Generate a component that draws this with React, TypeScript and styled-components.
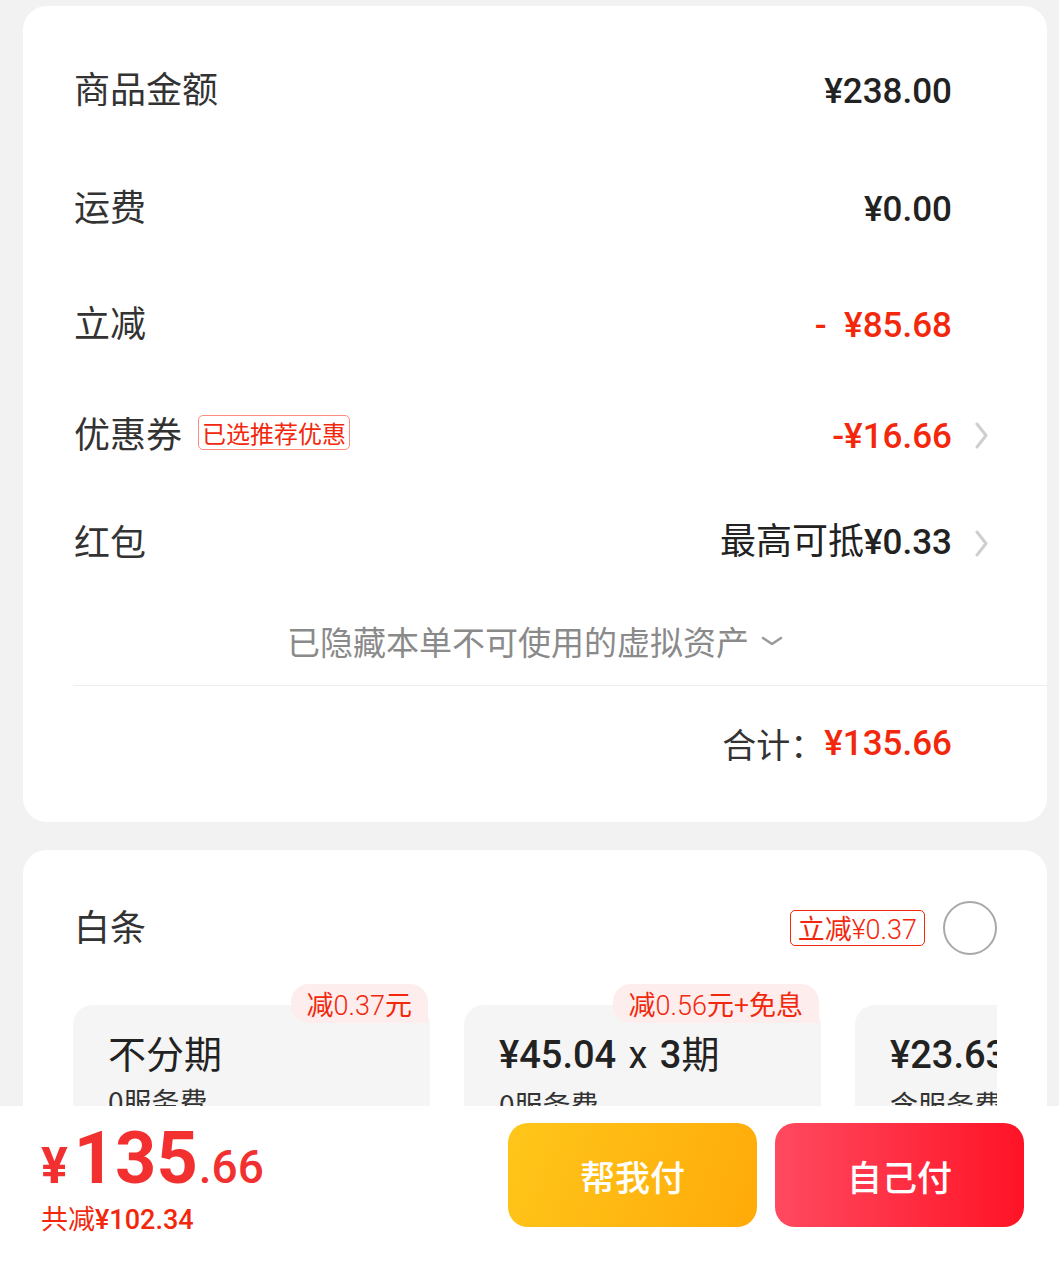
import React from "react";
import styled, { createGlobalStyle } from "styled-components";

const CJK = `"Noto Sans CJK SC", "Noto Sans", sans-serif`;
const NUM = `Roboto, "Noto Sans CJK SC", sans-serif`;
const RED = "#f2270c";

const GlobalStyle = createGlobalStyle`
  html, body { margin: 0; padding: 0; background: #f2f2f2; }
  body { font-family: ${CJK}; -webkit-font-smoothing: antialiased; }
  * { box-sizing: border-box; }
`;

const Page = styled.div`
  padding: 6px 12px 200px 23px;
`;

const Card = styled.section`
  background: #fff;
  border-radius: 24px;
  overflow: hidden;
`;

const SummaryCard = styled(Card)`
  padding: 25px 0 22px;
`;

const Row = styled.div<{ $h: number }>`
  display: flex;
  align-items: center;
  height: ${(p) => p.$h}px;
  padding: 0 50px 0 51px;
`;

const Label = styled.div`
  display: flex;
  align-items: center;
  gap: 16px;
  padding-bottom: 6px;
  font-family: ${CJK};
  font-size: 36px;
  color: #333;
  flex: none;
`;

const OutlineTag = styled.span`
  font-family: ${CJK};
  font-size: 24px;
  line-height: 33px;
  height: 35px;
  padding: 0 3px;
  color: ${RED};
  border: 1px solid #ff8c7e;
  border-radius: 5px;
`;

const Value = styled.div<{ $red?: boolean; $mixed?: boolean }>`
  margin-left: auto;
  padding-top: ${(p) => (p.$mixed ? 0 : 4)}px;
  padding-bottom: ${(p) => (p.$mixed ? 6 : 0)}px;
  font-family: ${NUM};
  font-size: 35px;
  font-weight: 500;
  line-height: 1.2;
  color: ${(p) => (p.$red ? RED : "#222")};
  white-space: pre;
`;

const ValueCJK = styled.span`
  font-family: ${CJK};
  font-weight: 400;
  font-size: 36px;
`;

const ChevronSlot = styled.div`
  width: 45px;
  flex: none;
  display: flex;
  justify-content: flex-end;
  padding-right: 9px;
`;

const HiddenRow = styled.div`
  height: 88px;
  display: flex;
  align-items: center;
  justify-content: center;
  gap: 12px;
  font-family: ${CJK};
  font-size: 33px;
  color: #8a8a8a;
`;

const Divider = styled.div`
  height: 1px;
  background: #eeeeee;
  margin-left: 50px;
`;

const TotalRow = styled.div`
  height: 114px;
  display: flex;
  align-items: center;
  justify-content: flex-end;
  padding-right: 95px;
`;

const TotalLabel = styled.span`
  font-family: ${CJK};
  font-size: 34px;
  color: #333;
`;

const TotalValue = styled.span`
  font-family: ${NUM};
  font-size: 35px;
  font-weight: 500;
  color: ${RED};
`;

const PayCard = styled(Card)`
  margin-top: 28px;
  padding-top: 28px;
  padding-bottom: 40px;
`;

const HeaderRow = styled.div`
  height: 100px;
  display: flex;
  align-items: center;
  padding: 0 50px 0 51px;
`;

const HeaderRight = styled.div`
  margin-left: auto;
  display: flex;
  align-items: center;
  gap: 18px;
`;

const SolidTag = styled.span`
  font-family: ${CJK};
  font-size: 27px;
  line-height: 34px;
  height: 36px;
  padding: 0 7px;
  color: ${RED};
  border: 1px solid ${RED};
  border-radius: 5px;
`;

const TagNum = styled.span`
  font-family: ${NUM};
  font-weight: 300;
`;

const Radio = styled.span`
  width: 54px;
  height: 54px;
  border-radius: 50%;
  border: 2px solid #a8a8a8;
`;

const Scroller = styled.div`
  margin: 6px 50px 0 50px;
  display: flex;
  gap: 34px;
  overflow: hidden;
`;

const Plan = styled.div`
  position: relative;
  flex: none;
  width: 357px;
  padding-top: 21px;
`;

const PlanBadge = styled.span`
  position: absolute;
  top: 0;
  right: 2px;
  height: 39px;
  line-height: 39px;
  padding: 0 16px;
  background: #fdeded;
  color: ${RED};
  font-family: ${CJK};
  font-size: 27px;
  border-radius: 18px 18px 0 18px;
`;

const BadgeNum = styled.span`
  font-family: ${NUM};
  font-weight: 300;
`;

const PlanCard = styled.div`
  background: #f5f5f5;
  border-radius: 20px 20px 0 0;
  height: 170px;
  padding: 22px 0 0 35px;
  white-space: nowrap;
`;

const PlanTitle = styled.div`
  font-family: ${CJK};
  font-size: 38px;
  line-height: 50px;
  color: #222;
`;

const PlanNum = styled.span`
  font-family: ${NUM};
  font-weight: 500;
`;

const PlanX = styled.span`
  font-family: ${NUM};
  font-weight: 400;
  padding: 0 3px;
`;

const PlanSub = styled.div`
  margin-top: 4px;
  font-family: ${CJK};
  font-size: 28px;
  color: #333;
`;

const BottomBar = styled.footer`
  position: fixed;
  left: 0;
  right: 0;
  bottom: 0;
  height: 169px;
  background: #fff;
  display: flex;
  align-items: flex-start;
  padding: 17px 35px 0 41px;
`;

const PriceBlock = styled.div`
  display: flex;
  flex-direction: column;
`;

const PriceLine = styled.div`
  display: flex;
  align-items: baseline;
  line-height: 1;
  color: #f23030;
  font-family: ${NUM};
`;

const PriceYen = styled.span`
  font-size: 50px;
  font-weight: 700;
`;

const PriceDec = styled.span`
  font-size: 46px;
  font-weight: 500;
`;

const PriceBig = styled.span`
  font-size: 72px;
  font-weight: 700;
  margin: 0 1px 0 6px;
`;

const SaveLine = styled.div`
  margin-top: 8px;
  font-family: ${CJK};
  font-size: 27px;
  line-height: 30px;
  color: ${RED};
`;

const SaveNum = styled.span`
  font-family: ${NUM};
  font-weight: 500;
`;

const Buttons = styled.div`
  margin-left: auto;
  display: flex;
  gap: 18px;
`;

const PayButton = styled.button<{ $from: string; $to: string; $angle: number }>`
  width: 249px;
  height: 104px;
  border: none;
  border-radius: 20px;
  color: #fff;
  font-family: ${CJK};
  font-size: 35px;
  font-weight: 500;
  background: linear-gradient(${(p) => p.$angle}deg, ${(p) => p.$from}, ${(p) => p.$to});
`;

const ChevronRight = () => (
  <svg width="13" height="27" viewBox="0 0 13 27" fill="none">
    <polyline points="2,2 11,13.5 2,25" stroke="#cfcfcf" strokeWidth="3" strokeLinecap="round" strokeLinejoin="round" />
  </svg>
);

const ChevronDown = () => (
  <svg width="22" height="12" viewBox="0 0 22 12" fill="none">
    <polyline points="2,3 11,9 20,3" stroke="#9a9a9a" strokeWidth="2.5" strokeLinecap="round" strokeLinejoin="round" />
  </svg>
);

type Line = {
  label: string;
  tag?: string;
  value: React.ReactNode;
  red?: boolean;
  mixed?: boolean;
  chevron?: boolean;
  h: number;
};

const lines: Line[] = [
  { label: "商品金额", value: "¥238.00", h: 118 },
  { label: "运费", value: "¥0.00", h: 118 },
  { label: "立减", value: "-  ¥85.68", red: true, h: 114 },
  { label: "优惠券", tag: "已选推荐优惠", value: "-¥16.66", red: true, chevron: true, h: 108 },
  {
    label: "红包",
    value: (
      <>
        <ValueCJK>最高可抵</ValueCJK>¥0.33
      </>
    ),
    mixed: true,
    chevron: true,
    h: 108,
  },
];

const plans = [
  {
    badge: (
      <>
        减<BadgeNum>0.37</BadgeNum>元
      </>
    ),
    title: <>不分期</>,
    sub: "0服务费",
  },
  {
    badge: (
      <>
        减<BadgeNum>0.56</BadgeNum>元+免息
      </>
    ),
    title: (
      <>
        <PlanNum>¥45.04</PlanNum>
        <PlanX> x </PlanX>
        <PlanNum>3</PlanNum>期
      </>
    ),
    sub: "0服务费",
  },
  {
    badge: null,
    title: (
      <>
        <PlanNum>¥23.63</PlanNum>
        <PlanX> x </PlanX>
        <PlanNum>6</PlanNum>期
      </>
    ),
    sub: "含服务费",
  },
];

export default function App() {
  return (
    <>
      <GlobalStyle />
      <Page>
        <SummaryCard>
          {lines.map((l) => (
            <Row key={l.label} $h={l.h}>
              <Label>
                {l.label}
                {l.tag && <OutlineTag>{l.tag}</OutlineTag>}
              </Label>
              <Value $red={l.red} $mixed={l.mixed}>{l.value}</Value>
              <ChevronSlot>{l.chevron && <ChevronRight />}</ChevronSlot>
            </Row>
          ))}
          <HiddenRow>
            已隐藏本单不可使用的虚拟资产
            <ChevronDown />
          </HiddenRow>
          <Divider />
          <TotalRow>
            <TotalLabel>合计：</TotalLabel>
            <TotalValue>¥135.66</TotalValue>
          </TotalRow>
        </SummaryCard>

        <PayCard>
          <HeaderRow>
            <Label>白条</Label>
            <HeaderRight>
              <SolidTag>
                立减<TagNum>¥0.37</TagNum>
              </SolidTag>
              <Radio />
            </HeaderRight>
          </HeaderRow>
          <Scroller>
            {plans.map((p, i) => (
              <Plan key={i}>
                {p.badge && <PlanBadge>{p.badge}</PlanBadge>}
                <PlanCard>
                  <PlanTitle>{p.title}</PlanTitle>
                  <PlanSub>{p.sub}</PlanSub>
                </PlanCard>
              </Plan>
            ))}
          </Scroller>
        </PayCard>
      </Page>

      <BottomBar>
        <PriceBlock>
          <PriceLine>
            <PriceYen>¥</PriceYen>
            <PriceBig>135</PriceBig>
            <PriceDec>.66</PriceDec>
          </PriceLine>
          <SaveLine>
            共减<SaveNum>¥102.34</SaveNum>
          </SaveLine>
        </PriceBlock>
        <Buttons>
          <PayButton $from="#ffc61a" $to="#ffaa08" $angle={110}>帮我付</PayButton>
          <PayButton $from="#ff4a60" $to="#ff1326" $angle={90}>自己付</PayButton>
        </Buttons>
      </BottomBar>
    </>
  );
}
